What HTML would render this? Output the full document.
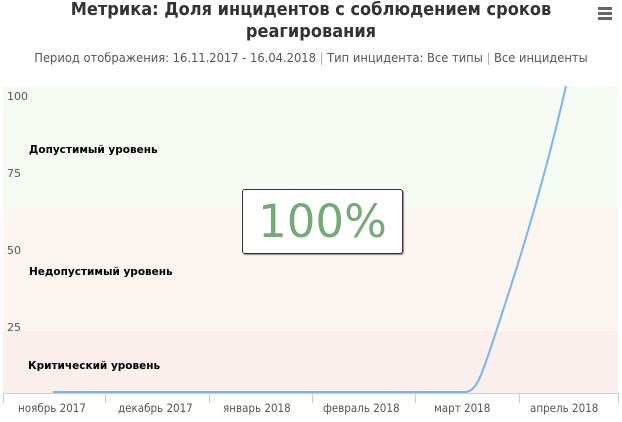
<!DOCTYPE html>
<html><head><meta charset="utf-8"><style>
body{margin:0;width:622px;height:422px;background:#fff;overflow:hidden;font-family:"DejaVu Sans","Liberation Sans",sans-serif;position:relative}
.a{position:absolute;white-space:nowrap}
</style></head><body>
<div class="a" style="left:0;width:622px;top:-1px;text-align:center;font-size:18px;font-weight:bold;line-height:22px;color:#333;font-family:'DejaVu Sans Condensed','DejaVu Sans',sans-serif">Метрика: Доля инцидентов с соблюдением сроков<br>реагирования</div>
<div class="a" style="left:598px;top:7px;width:14px">
<div style="height:3px;background:#666;margin-bottom:2px"></div><div style="height:3px;background:#666;margin-bottom:2px"></div><div style="height:3px;background:#666"></div></div>
<div class="a" style="left:0;width:622px;top:51px;text-align:center;font-size:12.8px;color:#555;font-family:'DejaVu Sans Condensed','DejaVu Sans',sans-serif">Период отображения: 16.11.2017 - 16.04.2018 <span style="color:#aaa">|</span> Тип инцидента: Все типы <span style="color:#aaa">|</span> Все инциденты</div>
<div class="a" style="left:3px;top:86px;width:615px;height:122px;background:#f6fbf4"></div>
<div class="a" style="left:3px;top:208px;width:615px;height:123px;background:#fdf5f0"></div>
<div class="a" style="left:3px;top:331px;width:615px;height:62px;background:#fbefed"></div>
<div class="a" style="left:7px;top:90px;font-size:11px;color:#555">100</div>
<div class="a" style="left:7px;top:167px;font-size:11px;color:#555">75</div>
<div class="a" style="left:7px;top:244px;font-size:11px;color:#555">50</div>
<div class="a" style="left:7px;top:321px;font-size:11px;color:#555">25</div>
<div class="a" style="left:29px;top:144px;font-size:10.5px;font-weight:bold;color:#000">Допустимый уровень</div>
<div class="a" style="left:29px;top:266px;font-size:10.5px;font-weight:bold;color:#000">Недопустимый уровень</div>
<div class="a" style="left:28px;top:360px;font-size:10.5px;font-weight:bold;color:#000">Критический уровень</div>
<svg class="a" style="left:0;top:0" width="622" height="422">
<line x1="3" y1="393.5" x2="618" y2="393.5" stroke="#c0d0e0"/>
<g stroke="#c0d0e0"><line x1="3.5" y1="393" x2="3.5" y2="403"/><line x1="105.5" y1="393" x2="105.5" y2="403"/><line x1="209.5" y1="393" x2="209.5" y2="403"/><line x1="312.5" y1="393" x2="312.5" y2="403"/><line x1="415.5" y1="393" x2="415.5" y2="403"/><line x1="519.5" y1="393" x2="519.5" y2="403"/><line x1="618.5" y1="393" x2="618.5" y2="403"/></g>
<path d="M53 392 L465 392 C475 392 480 380 490 350 C510 290 540 200 566 86" fill="none" stroke="#7cb5ec" stroke-width="2"/>
</svg>
<div class="a" style="left:242px;top:189px;width:159px;height:63px;border:1px solid #333;border-radius:3px;background:#fff;box-shadow:1px 1px 1px #888;text-align:center;font-size:45px;line-height:63px;color:#76a878;font-family:'DejaVu Sans',sans-serif">100%</div>
<div class="a" style="top:401px;font-size:11.5px;color:#555;font-family:'DejaVu Sans Condensed','DejaVu Sans',sans-serif;left:0;width:622px">
<span class="a" style="left:18px">ноябрь 2017</span><span class="a" style="left:118px">декабрь 2017</span><span class="a" style="left:223px">январь 2018</span><span class="a" style="left:323px">февраль 2018</span><span class="a" style="left:434px">март 2018</span><span class="a" style="left:530px">апрель 2018</span></div>
</body></html>
